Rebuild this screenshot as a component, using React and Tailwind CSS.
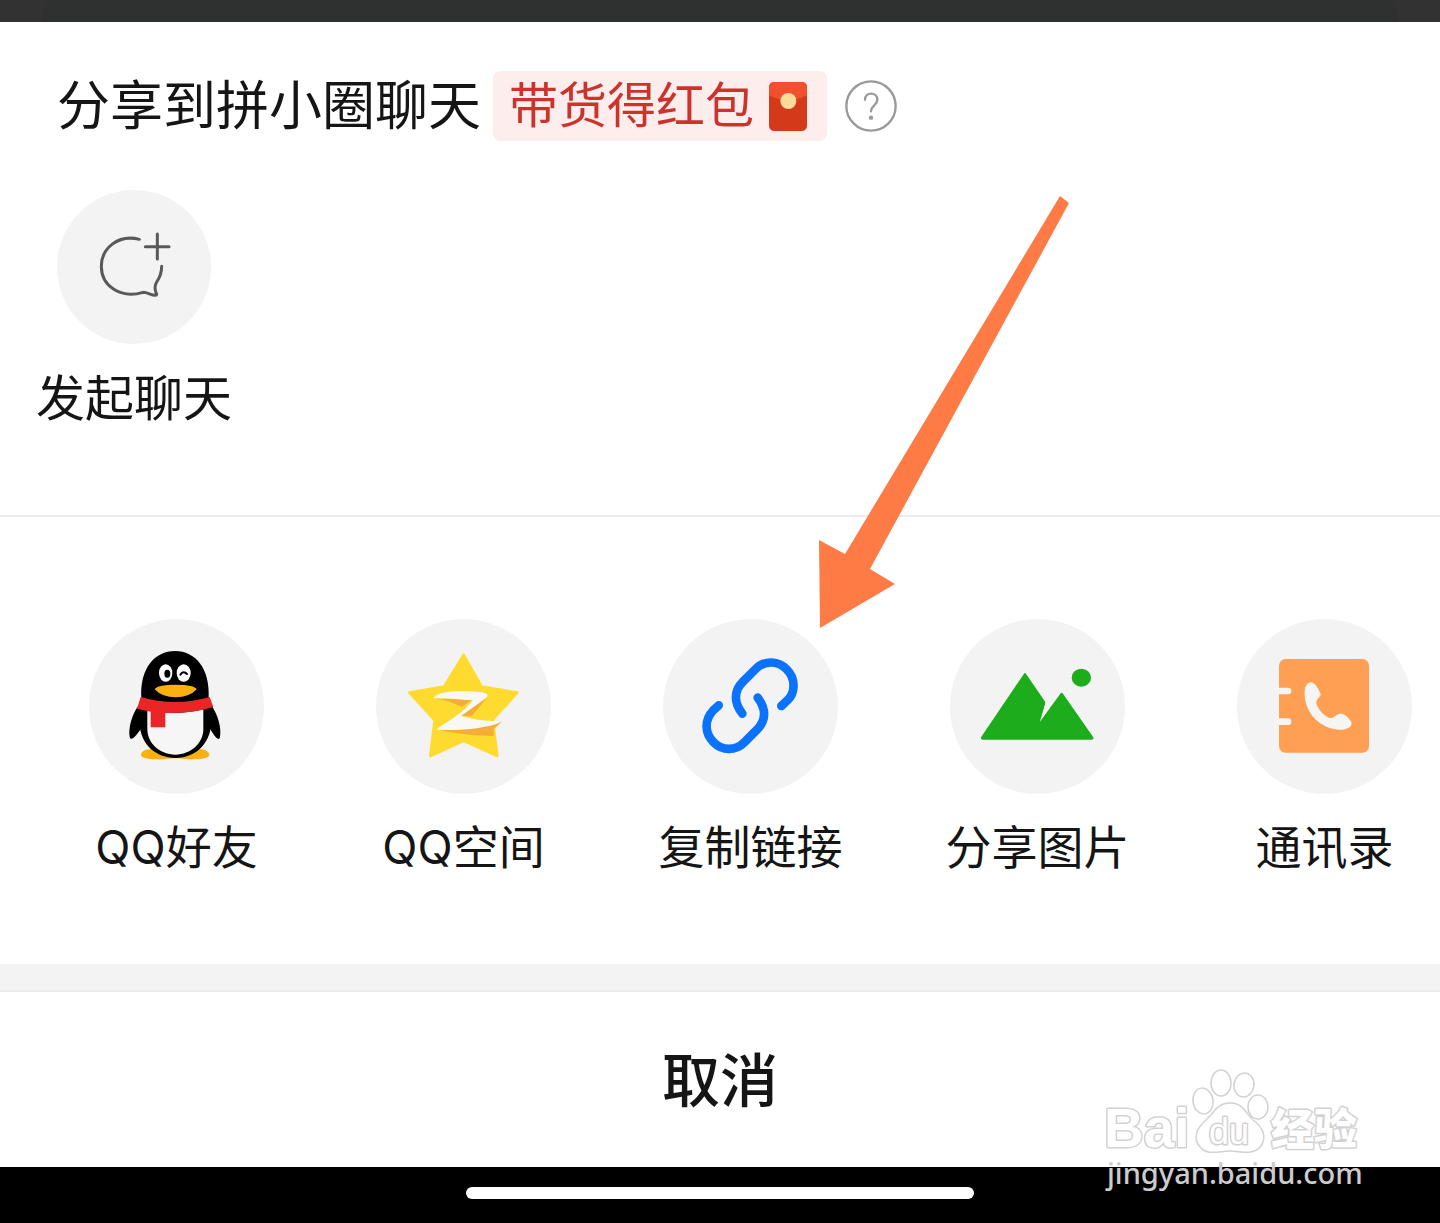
import React from "react";

const ChatPlusIcon = () => (
  <svg viewBox="21 30 462 462" className="size-full" fill="none" stroke="#595959" strokeWidth="9" strokeLinecap="round" strokeLinejoin="round" aria-hidden="true">
    <path d="M268 178C204 162 154 205 154 259c0 60 58 98 125 78 14 0 24 9 37 9 5-1 5-4 2-8-4-11-5-21 2-32 10-14 15-28 15-47" />
    <path d="M322 162v75M286 200h71" />
  </svg>
);

const QQIcon = () => (
  <svg viewBox="12 12 525 525" className="size-full" aria-hidden="true">
    <path d="M168 420c0-14 18-20 44-18h117c26-2 44 4 44 18 0 8-18 12-44 13-30 1-40-3-59-3s-28 4-58 3c-26-1-44-5-44-13z" fill="#fbb012" />
    <path d="M160 272c-18 25-31 66-26 94 3 10 12 8 33-23h209c20 33 26 33 29 23 5-28-6-66-25-94z" fill="#000" />
    <path d="M169 250c-5-90 40-142 101-142s106 52 101 142l8 60c3 72-44 119-107 119s-113-46-108-119z" fill="#000" />
    <path d="M187 286q84 18 168-3v60c0 42-38 76-84 76s-84-34-84-76z" fill="#f6f6f6" />
    <path d="M167 246q103 30 207 0l11 30q-65 20-144 18v43h-44v-47l-41-9z" fill="#eb2426" />
    <ellipse cx="242" cy="174" rx="20" ry="26" fill="#fff" />
    <ellipse cx="296" cy="174" rx="21" ry="26" fill="#fff" />
    <ellipse cx="247" cy="176" rx="9" ry="12" fill="#000" />
    <path d="M286 179q9-14 20-2" fill="none" stroke="#000" strokeWidth="6" strokeLinecap="round" />
    <path d="M209 223q6-14 63-14t63 14q-22 24-63 24t-63-24z" fill="#fbb012" />
  </svg>
);

const QzoneIcon = () => (
  <svg viewBox="3 12 525 525" className="size-full" aria-hidden="true">
    <path d="M266 120l54 95 107 18-74 81 14 109-101-46-100 46 13-108-76-82 104-18z" fill="#ffda2f" stroke="#ffda2f" strokeWidth="8" strokeLinejoin="round" />
    <path d="M186 251L292 254 260 276Q225 257 186 251zM338 246L290 304 258 302zM188 344L380 320 356 343V363Q270 362 188 344z" fill="#f5ad38" />
    <path d="M175 250C184 228 260 226 320 232C338 235 342 241 332 250L259 302C290 314 340 317 380 320C340 340 250 348 186 344C190 334 262 300 293 256C250 252 215 248 175 250z" fill="#f8f8f5" />
  </svg>
);

const LinkIcon = () => (
  <svg viewBox="9 267 525 525" className="size-full" fill="none" stroke="#0b72fb" strokeWidth="26" strokeLinecap="round" aria-hidden="true">
    <path d="M247 551c-26-34-26-68 2-96l38-38c26-26 66-26 92 0 29 28 28 72 2 95l-17 16" />
    <path d="M293 503c26 34 26 68-2 96l-38 38c-26 26-66 26-92 0-28-28-28-67-2-95l17-16" />
  </svg>
);

const PictureIcon = () => (
  <svg viewBox="15 12 525 525" className="size-full" fill="#1cac1c" aria-hidden="true">
    <path d="M240 178l58 85-16 66 68-92 91 130q3 4-2 4H114q-4 0-2-4z" stroke="#1cac1c" strokeWidth="7" strokeLinejoin="round" />
    <path d="M302 262l-18 60 30-44v-30z" fill="#f3f3f3" />
    <ellipse cx="409" cy="188" rx="29" ry="27" />
  </svg>
);

const ContactsIcon = () => (
  <svg viewBox="6 12 525 525" className="size-full" aria-hidden="true">
    <rect x="132" y="132" width="270" height="281" rx="20" fill="#ff9f54" />
    <path d="M126 228h33M126 320h33" stroke="#f5f5f3" strokeWidth="20" strokeLinecap="round" />
    <path d="M229 202c10 0 22 20 28 35 2 8-14 13-13 27 4 17 20 37 38 44 16 6 22-14 38-12 12 2 24 15 29 25 3 12-6 20-26 23-69 4-117-56-114-112 0-18 8-30 20-30z" fill="#f5f5f3" />
  </svg>
);

const RedPacket = () => (
  <svg viewBox="0 0 114 147" className="h-[49px] w-[38px]" aria-hidden="true">
    <rect width="114" height="147" rx="16" fill="#d43a1a" />
    <path d="M0 40V16Q0 0 16 0h82q16 0 16 16v24q-57 30-114 0z" fill="#f0502e" />
    <circle cx="58" cy="57" r="24" fill="#fddb98" />
  </svg>
);

const HelpIcon = () => (
  <svg viewBox="0 0 156 156" className="size-[52px]" fill="none" stroke="#999" strokeWidth="7" strokeLinecap="round" aria-hidden="true">
    <circle cx="78" cy="78" r="74" />
    <path d="M60 59c0-24 37-24 37 0 0 17-19 17-19 35" />
    <circle cx="78" cy="113" r="3" fill="#999" />
  </svg>
);

// Orange arrow that points at the copy link entry
const Pointer = () => (
  <svg viewBox="0 0 250 432" className="pointer-events-none absolute -top-[423px] left-[212px] h-[432px] w-[250px]" fill="#ff7b46" aria-hidden="true">
    <path d="M241 0l9 7L51 373l25 15L1 432 0 344l26 14z" />
  </svg>
);

const Watermark = () => (
  <svg viewBox="0 0 290 130" className="pointer-events-none absolute right-[60px] bottom-[25px] h-[130px] w-[290px]" role="img" aria-label="Baidu 经验">
    <g fill="#fff" stroke="#d2d2d2" strokeWidth="1.5">
      <ellipse cx="113" cy="33" rx="10" ry="13" transform="rotate(-8 113 33)" />
      <ellipse cx="131" cy="15" rx="10" ry="13" />
      <ellipse cx="154" cy="17" rx="10" ry="12" transform="rotate(10 154 17)" />
      <ellipse cx="168" cy="39" rx="10" ry="12" />
      <path d="M140 35c14 0 16 11 23 17 10 7 14 17 8 26-8 10-20 5-31 5s-23 5-30-4c-8-9-3-19 6-27 8-7 11-17 24-17z" />
      <g strokeWidth="3" paintOrder="stroke" strokeLinejoin="round">
        <text x="14" y="79" fontSize="55" fontWeight="700" fontFamily="Liberation Sans, sans-serif">Bai</text>
        <text x="119" y="76" fontSize="36" fontFamily="Liberation Sans, sans-serif">du</text>
        <text x="181" y="77" fontSize="43" fontWeight="900" fontFamily="Noto Sans CJK SC, sans-serif">经验</text>
      </g>
    </g>
    <text x="17" y="116" fontSize="29" fontWeight="500" fill="#ccc" fontFamily="Noto Sans, sans-serif">jingyan.baidu.com</text>
  </svg>
);

const shareItems = [
  { label: "QQ好友", icon: <QQIcon /> },
  { label: "QQ空间", icon: <QzoneIcon /> },
  { label: "复制链接", icon: <LinkIcon />, pointed: true },
  { label: "分享图片", icon: <PictureIcon /> },
  { label: "通讯录", icon: <ContactsIcon /> },
];

const App = () => {
  return (
    <main className="relative min-h-screen overflow-hidden bg-white font-['Inter','Noto_Sans_CJK_SC',sans-serif] text-[#151515]">
      {/* dimmed page behind the sheet */}
      <div className="h-[22px] bg-[#333233] px-[42px]">
        <div className="h-full rounded-tl-2xl rounded-tr-2xl bg-[#2f3130]" />
      </div>

      {/* chat section */}
      <section className="h-[495px] border-b-2 border-[#ebebeb] pt-12">
        <div className="flex h-[72px] items-center pl-[57px]">
          <h1 className="text-[53px] leading-[70px]">分享到拼小圈聊天</h1>
          <div className="ml-3 flex h-[70px] items-center gap-[15px] rounded-lg bg-[#fdeeed] pr-5 pl-4">
            <span className="text-[49px] leading-[66px] text-[#cb332d]">带货得红包</span>
            <RedPacket />
          </div>
          <button type="button" aria-label="帮助" className="ml-[18px]">
            <HelpIcon />
          </button>
        </div>

        <button type="button" className="mt-12 ml-9 flex flex-col items-center gap-5">
          <span className="size-[154px] rounded-full bg-[#f3f3f3]">
            <ChatPlusIcon />
          </span>
          <span className="text-[49px] leading-[70px]">发起聊天</span>
        </button>
      </section>

      {/* share targets, the row runs past the right edge */}
      <section className="h-[447px] pt-[102px]">
        <ul className="-mr-7 grid grid-cols-5 pl-[33px]">
          {shareItems.map((item) => (
            <li key={item.label} className="relative flex justify-center">
              <button type="button" className="flex flex-col items-center gap-5">
                <span className="size-[175px] rounded-full bg-[#f3f3f3]">{item.icon}</span>
                <span className="text-[46px] leading-[66px] whitespace-nowrap">{item.label}</span>
              </button>
              {item.pointed && <Pointer />}
            </li>
          ))}
        </ul>
      </section>

      <div className="h-7 border-b-2 border-[#ebebeb] bg-[#f3f3f3]" />

      <button type="button" className="block h-[175px] w-full pt-1 text-[58px] font-medium">
        取消
      </button>

      {/* home indicator */}
      <div className="flex h-14 justify-center bg-black pt-5">
        <div className="h-3 w-[508px] rounded-full bg-white" />
      </div>

      <Watermark />
    </main>
  );
};

export default App;
